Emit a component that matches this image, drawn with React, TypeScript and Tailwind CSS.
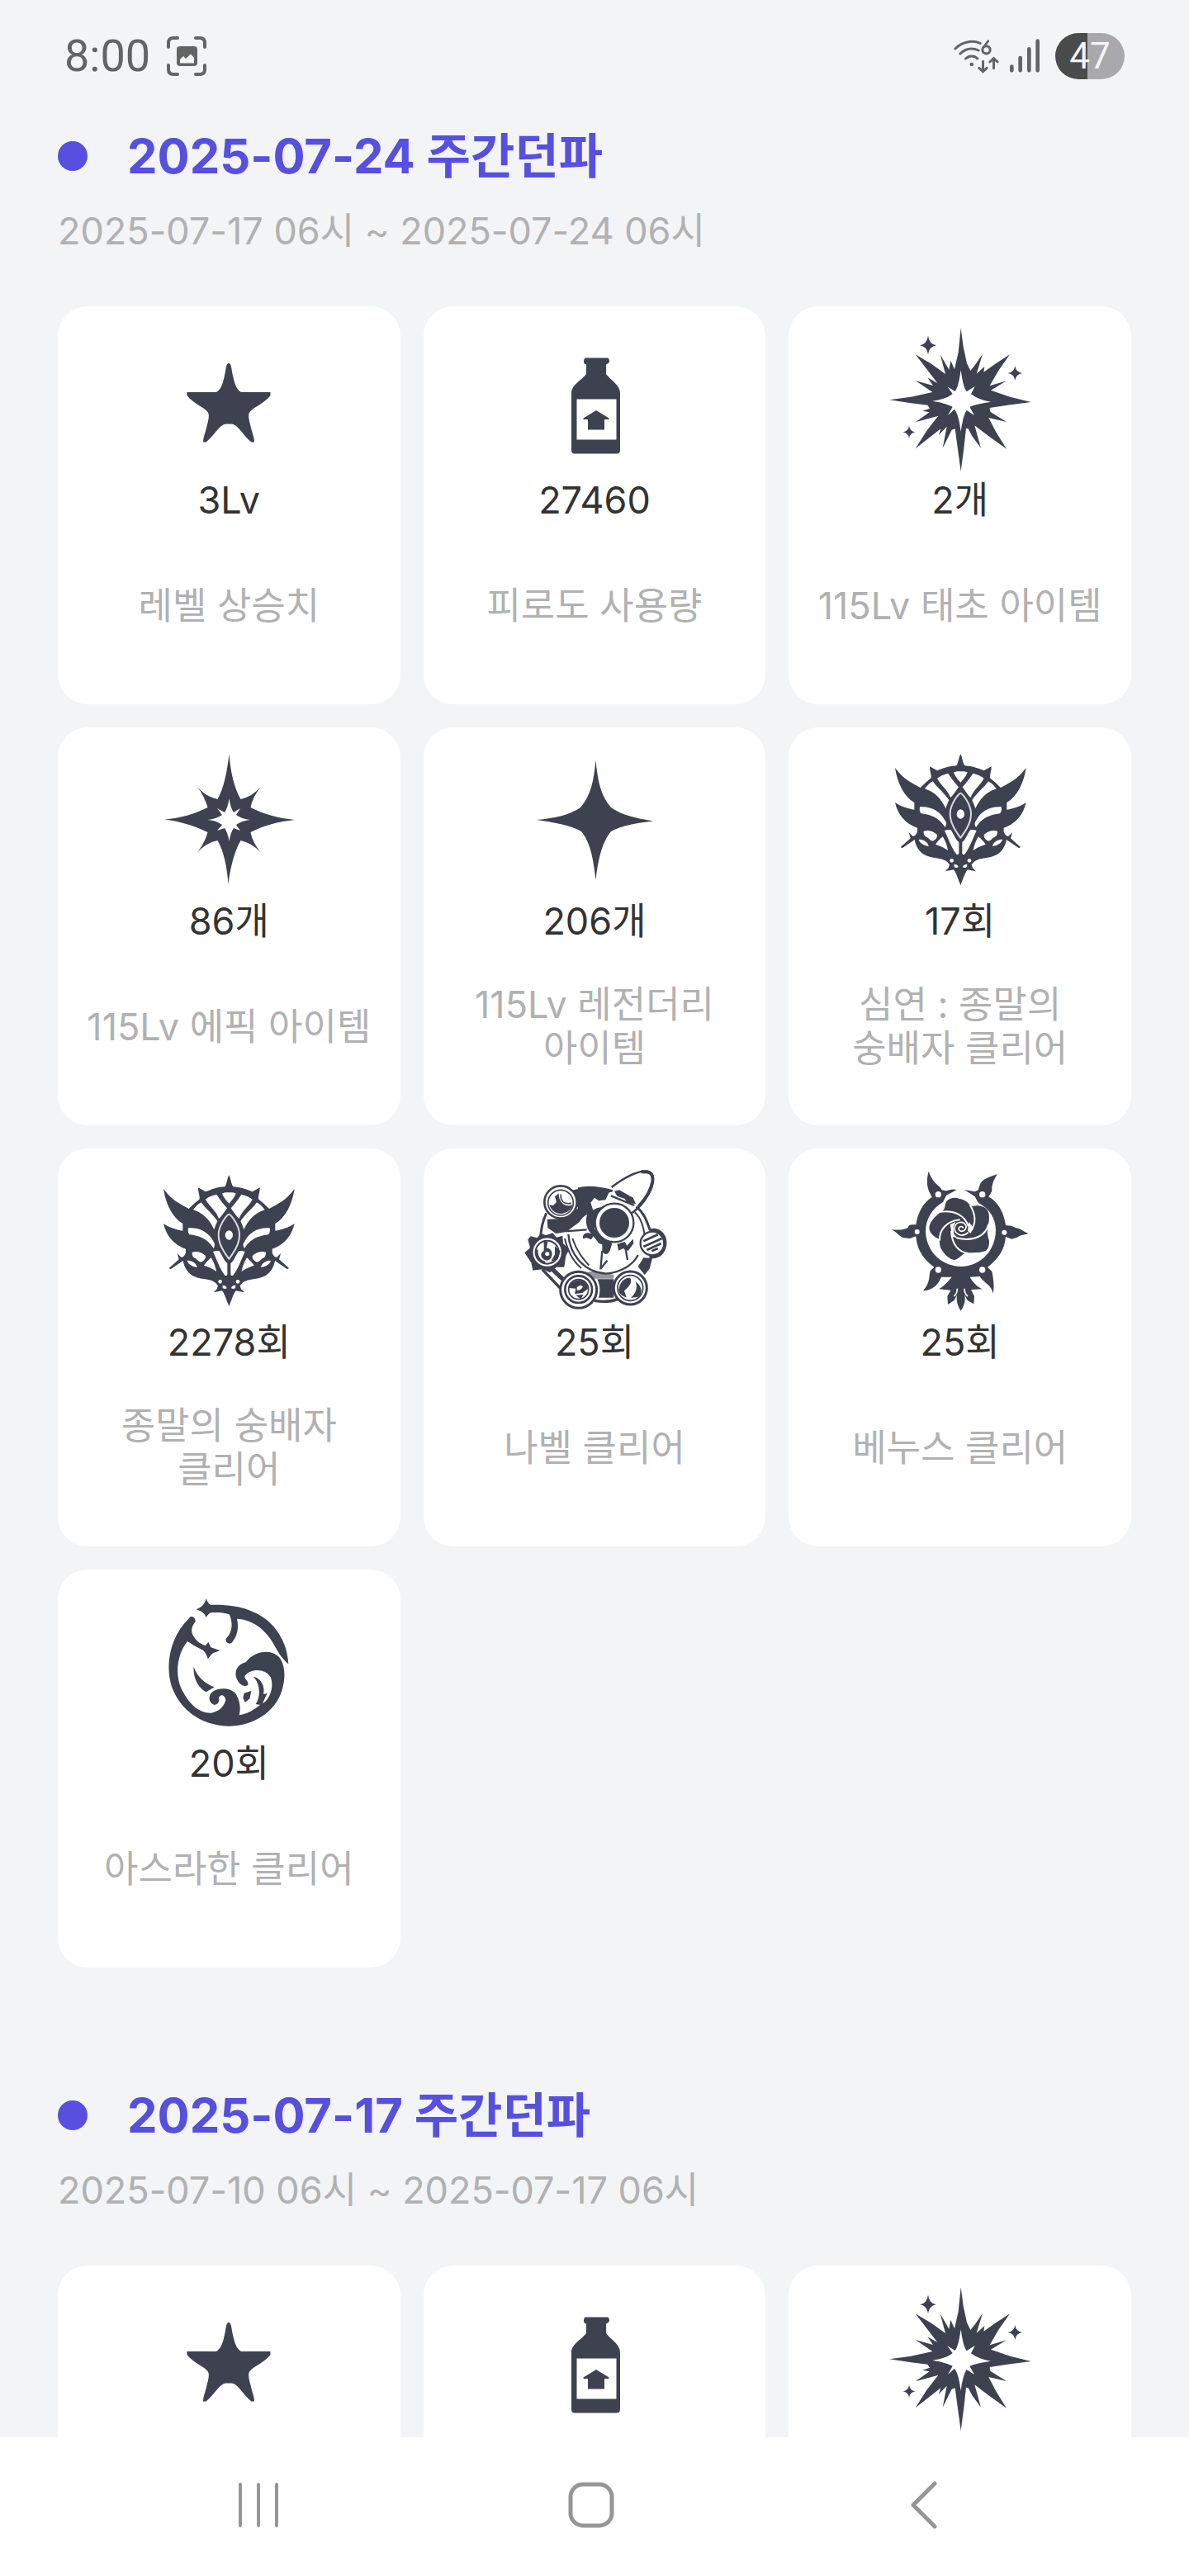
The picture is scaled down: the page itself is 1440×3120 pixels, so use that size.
import type { ReactNode } from "react";

const INK = "#3e4150";

function Art({ box = "0 0 180 180", children }: { box?: string; children: ReactNode }) {
  return (
    <svg viewBox={box} className="size-[180px] shrink-0" fill={INK} aria-hidden="true">
      {children}
    </svg>
  );
}

/* Draws a half once and again flipped around the vertical line x = axis. */
function Mirror({ axis, children }: { axis: number; children: ReactNode }) {
  return (
    <>
      <g>{children}</g>
      <g transform={`translate(${axis * 2} 0) scale(-1 1)`}>{children}</g>
    </>
  );
}

function LevelStar() {
  return (
    <Art>
      <path d="M90 45C93.500 45 93 52 95.500 62C97.500 70 99 76 105 80H140.500V84C134 93 120 98 115.500 104C112.500 108 115 115 117.500 125C119 131 121 135 121 140.500H117.500C108 133 101 119 93.500 118.500H86.500C79 119 72 133 62.500 140.500H59C59 135 61 131 62.500 125C65 115 67.500 108 64.500 104C60 98 46 93 39.500 84V80H75C81 76 82.500 70 84.500 62C87 52 86.500 45 90 45Z" />
    </Art>
  );
}

function Bottle() {
  return (
    <Art>
      <path d="M79 38.500H106Q108 39 108 43Q107 46 104 46.500V58C109 65 121 71 121 81V150Q121 154.500 117 154.500H66Q62 154.500 62 150V81C62 71 75 65 80 58V46.500Q77 46 77 43Q77 39 79 38.500Z" />
      <rect x="68.500" y="88.500" width="48" height="49" fill="#fff" />
      <path d="M92 102L107.500 111.500V113H102V125.500H82V113H76.500V111.500Z" />
    </Art>
  );
}

function PrimevalBurst() {
  return (
    <Art box="339 75 540 540">
      <path d="M611 82L620 150L633 210L646 237L665 213L690 176L668 248L697 222L694 242L736 212L789 178L748 236L716 292L777 274L720 308L790 332L866 351L780 362L716 372L718 386L777 423L712 408L738 458L777 521L712 475L661 436L684 518L652 475L638 448L630 446L622 520L611 603L599 515L590 448L578 452L545 518L560 440L531 470L538 448L446 520L487 455L529 401L446 424L497 388L472 383L498 374L490 362L430 355L352 343L430 332L508 315L446 273L510 291L490 262L526 282L446 178L505 213L555 249L536 178L568 233L574 200L588 232L602 170Z" />
      <path
        fill="#fff"
        d="M611 235C616 270 622 300 632 313L662 294L648 322C670 338 690 345 720 350C690 355 665 358 643 368L660 399L632 381C620 400 615 430 611 458C607 430 602 395 588 377L564 399L581 368C560 358 540 352 508 347C545 342 565 334 581 321L562 295L590 312C600 300 606 270 611 235Z"
      />
      <path d="M492 110Q496 140 522 145Q496 149 492 178Q488 149 462 145Q488 140 492 110ZM808 220Q811 242 834 246Q811 250 808 272Q805 250 782 246Q805 242 808 220ZM423 437Q426 456 445 460Q426 464 423 482Q420 464 401 460Q420 456 423 437Z" />
    </Art>
  );
}

function EpicStar() {
  return (
    <Art>
      <path d="M90.500 8C92 30 97 50 104.500 63Q118 60 129 48Q119 60 116.500 73C132 81 150 86 170 88C150 90 132 95 116.500 103Q119 116 129 127.500Q118 116 104.500 113C97 126 92 145 89.500 166C88 145 84 126 76.500 113Q62 116 52 127.500Q61 116 64.500 103C48 95 32 90 12 87.500C32 86 48 81 64.500 73Q61 60 52 48Q62 60 76.500 63C84 50 88 30 90.500 8Z" />
      <path
        fill="#fff"
        d="M90.500 62Q92 73 96 79L104 74L99 82Q106 87 116 88Q106 89 99 94L104 101L96 98Q92 104 90.500 114Q89 104 85 98L76 101L82 94Q75 89 64 88Q75 87 82 82L76 74L85 79Q89 73 90.500 62Z"
      />
    </Art>
  );
}

function LegendaryStar() {
  return (
    <Art>
      <path d="M91.500 16C94 40 97 58 110 73C122 82 140 86 161 89.500C140 92 122 95 110 102C98 116 94 140 91.500 160.500C89 140 86 116 74 102C62 95 42 91 20 88C42 86 60 82 73 73C86 58 89 40 91.500 16Z" />
    </Art>
  );
}

function WorshipperCrest() {
  return (
    <Art box="99 45 540 540">
      <Mirror axis={370}>
        <path d="M371 70C364 76 364 98 355 112C320 114 300 125 285 130L258 115C257 133 266 146 262 158C245 170 236 180 224 192C195 175 165 165 132 120C140 175 165 225 202 246V272C180 268 155 262 132 246C142 290 168 322 213 338V352C209 364 203 370 196 368L182 354L188 376L152 408L158 412L203 381C207 405 222 435 258 443C285 449 305 448 322 462L330 472L326 484L314 496L345 490C355 502 360 525 371 547Z" />
        <g fill="#fff">
          <path d="M371 133C362 132 354 132 345 136C349 148 360 164 371 174Z" />
          <path d="M325 140C308 144 294 150 285 158C299 184 326 203 333 228C342 222 350 208 363 190C346 170 334 155 325 140Z" />
          <path d="M269 169C257 176 249 184 240 196C276 207 302 235 316 268C320 255 324 246 328 237C308 208 285 192 269 169Z" />
          <path d="M222 262C220 272 221 280 227 286C267 290 295 306 314 336C320 325 319 318 314 312C298 278 262 258 222 262Z" />
          <path d="M236 350C235 362 240 370 248 372C258 378 263 390 273 384C283 378 287 368 284 362C271 350 253 345 236 350Z" />
          <path d="M218 381C232 378 252 390 254 405C236 402 222 394 218 381Z" />
          <path d="M305 370C294 379 285 389 279 398C295 403 311 410 324 420C321 402 315 386 305 370Z" />
          <path d="M312 348C326 377 336 410 355 434C363 438 365 432 364 421V390C350 380 346 360 334 345C325 344 319 345 312 348Z" />
          <circle cx="338" cy="457" r="7" />
          <path d="M346 470Q361 470 362 481Q354 486 347 480Z" />
        </g>
        <path d="M371 183C365 210 324 240 321 288C322 332 354 360 371 392Z" />
        <path
          d="M371 211C360 216 332 254 332 287C332 322 354 352 371 376"
          fill="none"
          stroke="#d9dade"
          strokeWidth="6"
        />
      </Mirror>
      <ellipse cx="370" cy="288" rx="14" ry="17" fill="#fff" />
    </Art>
  );
}

function NabelMachine() {
  return (
    <Art box="60 45 540 540">
      <g fill="none" stroke={INK}>
        <path d="M155 208C142 236 135 265 134 300M270 120C310 108 350 115 395 128M482 184C515 212 522 245 532 270" strokeWidth="9" />
        <path d="M476 205C502 228 508 262 512 288" strokeWidth="6" />
        <path d="M235 285C240 360 295 424 372 428C425 424 472 395 488 360" strokeWidth="7" />
        <path d="M250 300C268 352 290 375 310 398M222 300C232 345 254 385 282 408" strokeWidth="6" />
        <path d="M392 114C440 76 492 52 522 56C554 62 546 112 514 158C495 184 474 204 456 213" strokeWidth="8" />
        <path d="M500 58C530 56 544 62 541 92C536 128 512 160 490 184" strokeWidth="12" />
        <path d="M225 274L302 268M358 345L352 412M440 322L450 378M352 410L376 380M390 145L475 180" strokeWidth="7" />
        <path d="M140 412L205 480M330 526C362 532 390 530 415 520" strokeWidth="10" />
        <path d="M170 405L215 448" strokeWidth="16" />
      </g>
      <path d="M240 128C290 112 345 112 398 126L382 134L370 160L345 163L330 152L316 170L326 200L306 212C284 218 282 240 255 255L228 276L190 282L160 262L158 230L220 228L270 190Z" />
      <path d="M305 208C292 240 305 272 318 282C300 276 285 284 288 300L302 298L318 304L326 292L346 318L358 322V348C370 362 380 358 386 344L394 318L376 304L346 288L330 264L330 230L350 198L372 182L338 190Z" />
      <path d="M412 320L440 312L448 326L470 302L472 318L452 345L434 336L418 344ZM402 128L420 124L470 152L480 174L450 172L440 156L412 146Z" />
      <path d="M340 448H400V515H345C352 490 350 470 340 448ZM488 402L508 370L540 372L530 410L512 432Z" />
      <path d="M230 430L340 418L400 432V446H230Z" opacity=".55" />
      <circle cx="402" cy="243" r="70" fill="#fff" stroke={INK} strokeWidth="7" />
      <circle cx="402" cy="243" r="54" />
      <g fill="#fff" stroke={INK} strokeWidth="8">
        <circle cx="207" cy="168" r="59" />
        <circle cx="207" cy="170" r="46" strokeWidth="5" />
      </g>
      <path d="M166 178C172 198 190 212 212 210C232 206 246 196 250 178C225 188 200 172 200 136L186 148L192 168L180 180Z" />
      <path d="M208 140C205 162 218 178 246 172" fill="none" stroke={INK} strokeWidth="5" />
      <path d="M98 292L122 298L134 282L154 288L178 280L192 296L214 290L216 318L238 340L226 364L220 404L192 404L168 424L142 412L106 416L100 388L76 352L96 334L88 304Z" />
      <circle cx="158" cy="350" r="55" fill="#fff" stroke={INK} strokeWidth="7" />
      <circle cx="158" cy="350" r="42" fill="none" stroke={INK} strokeWidth="6" />
      <path d="M146 308L160 312L156 334C182 338 182 374 158 380C132 376 130 352 146 346ZM186 328L206 346L196 376L172 384L186 358Z" />
      <path d="M152 350Q168 346 166 360Q156 368 150 358Z" fill="#fff" />
      <path d="M120 340Q118 380 150 388" fill="none" stroke={INK} strokeWidth="9" />
      <circle cx="272" cy="487" r="66" fill="#fff" stroke={INK} strokeWidth="9" />
      <circle cx="272" cy="485" r="49" fill="#fff" stroke={INK} strokeWidth="8" />
      <circle cx="272" cy="485" r="36" fill="none" stroke={INK} strokeWidth="5" />
      <path d="M236 480C240 456 270 444 292 454L310 480L286 498L258 502L262 482ZM262 506L290 504L280 520Z" />
      <path d="M266 478Q278 464 288 476Q278 490 266 488Z" fill="#fff" />
      <circle cx="460" cy="480" r="60" fill="#fff" stroke={INK} strokeWidth="9" />
      <circle cx="460" cy="480" r="46" fill="#fff" stroke={INK} strokeWidth="5" />
      <path d="M418 490C420 460 440 440 460 444C470 462 450 480 438 490L446 514C430 510 420 500 418 490ZM478 456C500 470 508 496 490 512L462 516C482 498 488 476 478 456Z" />
      <path d="M530 266C565 254 596 285 592 322C588 358 562 378 530 372L528 358C556 360 576 346 578 318C576 292 556 276 530 282Z" />
      <circle cx="540" cy="318" r="43" fill="#fff" stroke={INK} strokeWidth="7" />
      <path d="M508 310L560 286M508 330L575 300M520 342L572 318M538 346L560 336" fill="none" stroke={INK} strokeWidth="8" />
    </Art>
  );
}

function VenusRose() {
  return (
    <Art box="69 45 540 540">
      <path d="M326 123C310 118 296 126 286 127L272 124C268 108 240 104 224 56C216 84 216 116 230 138L236 150C206 168 184 206 178 250C168 250 160 248 153 252L148 262C130 270 110 270 88 267C108 276 116 292 134 298L156 300L178 292C182 342 205 376 244 404L230 418C224 438 232 458 204 490C240 488 258 468 270 440L308 440C296 456 280 472 262 484L304 488L292 510L294 540L316 526L328 505C322 524 330 548 341 563C352 548 360 524 354 505L366 526L388 538L390 510L378 486L420 484C400 476 384 458 374 440L410 438C424 462 452 468 458 500C464 470 458 440 454 420L438 404C476 376 500 342 504 294L526 302L546 296C560 286 570 288 586 282C568 276 556 262 542 262L524 254L504 252C498 206 476 168 442 148L454 128C452 104 462 84 474 66C446 76 416 84 410 106L404 124L392 130L354 123L392 148L404 170C446 192 468 226 468 272C466 344 414 400 342 402C268 400 216 346 213 276C213 228 238 190 276 168L288 144Z" />
      <g fill="#fff">
        <circle cx="259" cy="140" r="11" />
        <circle cx="419" cy="140" r="11" />
        <circle cx="182" cy="276" r="9" />
        <circle cx="499" cy="278" r="9" />
        <circle cx="259" cy="414" r="11" />
        <circle cx="419" cy="414" r="11" />
      </g>
      <path d="M328 482Q328 500 316 510M354 482Q354 500 366 510" fill="none" stroke="#fff" strokeWidth="5" />
      <path d="M276 198C286 190 282 172 290 164C300 154 320 148 336 156C352 158 368 168 376 182C392 184 400 176 412 182C428 184 440 194 443 212C446 232 440 250 438 266C436 284 440 296 444 308C444 324 442 336 432 344C410 354 380 350 360 352C344 356 336 376 316 378C298 374 280 356 270 338C262 324 266 312 262 302C244 294 226 280 226 260C230 234 252 216 276 198Z" />
      <g fill="none" stroke="#fff" strokeWidth="6">
        <path d="M262 204C314 196 356 214 368 256" />
        <path d="M374 178C396 214 396 246 378 272" />
        <path d="M442 248C432 288 390 314 326 298" />
        <path d="M368 354C334 350 308 322 306 272" />
        <path d="M264 308C262 268 290 236 338 232" />
      </g>
      <path d="M370 240L388 262L376 282L366 272ZM302 250L322 240L314 258L316 284L332 302L310 292Z" fill="#fff" />
      <path
        d="M350 262C345 252 330 258 334 268C342 280 362 272 360 254C352 236 322 236 318 262C318 286 348 298 368 278"
        fill="none"
        stroke="#fff"
        strokeWidth="5"
      />
    </Art>
  );
}

function AsrahanMoon() {
  return (
    <Art box="22 15 540 540">
      <path d="M210 48C214 60 219 67 226 72C330 68 405 95 455 150C488 190 505 230 509 286C494 275 474 250 462 226C436 172 385 124 322 122C330 155 322 186 304 208C296 218 278 208 282 194C306 170 308 136 294 106C270 98 245 99 226 100C219 104 214 110 210 118C205 104 198 96 174 88C198 78 205 66 210 48Z" />
      <path d="M148 120C154 108 172 116 171 132C164 142 156 152 158 172C166 196 186 214 208 220L218 206L227 226L260 237L232 248L216 268C212 250 202 236 190 232C172 224 156 212 142 204C104 250 94 330 124 384C150 434 186 466 228 464C254 460 274 444 281 418C280 400 262 392 256 410C260 424 250 436 238 434C218 426 216 400 234 386C262 368 306 374 320 398C334 424 336 450 330 472C372 468 400 436 424 424C446 402 456 362 444 334C426 302 372 300 350 330C350 344 364 346 362 362C346 374 324 356 318 330C314 304 330 286 354 280C384 240 442 230 474 260C496 284 498 330 490 364C474 448 396 510 296 512C196 512 116 456 84 366C60 286 80 186 148 120Z" />
      <path d="M165 296C176 328 200 356 240 370L210 388C180 372 162 336 165 296Z" />
      <path d="M382 332C412 340 424 368 418 396L432 392L412 436L390 432C408 404 408 362 382 332Z" />
      <path d="M348 392L374 384L368 412L352 426L344 410Z" />
    </Art>
  );
}

type Stat = { icon: () => ReactNode; value?: string; label?: string };
type Week = { title: string; period: string; stats: Stat[] };

const WEEKS: Week[] = [
  {
    title: "2025-07-24 주간던파",
    period: "2025-07-17 06시 ~ 2025-07-24 06시",
    stats: [
      { icon: LevelStar, value: "3Lv", label: "레벨 상승치" },
      { icon: Bottle, value: "27460", label: "피로도 사용량" },
      { icon: PrimevalBurst, value: "2개", label: "115Lv 태초 아이템" },
      { icon: EpicStar, value: "86개", label: "115Lv 에픽 아이템" },
      { icon: LegendaryStar, value: "206개", label: "115Lv 레전더리\n아이템" },
      { icon: WorshipperCrest, value: "17회", label: "심연 : 종말의\n숭배자 클리어" },
      { icon: WorshipperCrest, value: "2278회", label: "종말의 숭배자\n클리어" },
      { icon: NabelMachine, value: "25회", label: "나벨 클리어" },
      { icon: VenusRose, value: "25회", label: "베누스 클리어" },
      { icon: AsrahanMoon, value: "20회", label: "아스라한 클리어" },
    ],
  },
  {
    title: "2025-07-17 주간던파",
    period: "2025-07-10 06시 ~ 2025-07-17 06시",
    stats: [{ icon: LevelStar }, { icon: Bottle }, { icon: PrimevalBurst }],
  },
];

function StatCard({ icon: Icon, value, label }: Stat) {
  return (
    <li className="flex min-h-[482px] flex-col items-center rounded-[36px] bg-white py-6 text-center">
      <Icon />
      {value && <p className="text-[45px] leading-[62px] text-[#333333]">{value}</p>}
      {label && (
        <div className="flex flex-1 items-center">
          <p className="text-[45px] leading-[53px] whitespace-pre-line text-[#b1b1b1]">{label}</p>
        </div>
      )}
    </li>
  );
}

function WeekSection({ title, period, stats }: Week) {
  return (
    <section>
      <h2 className="flex items-center gap-12 text-[58px] leading-[74px] font-bold text-[#564fe0]">
        <span className="size-9 shrink-0 rounded-full bg-[#564fe0]" />
        {title}
      </h2>
      <p className="mt-6 text-[45px] leading-[60px] text-[#b1b1b1]">{period}</p>
      <ul className="mt-[61px] grid grid-cols-3 gap-7">
        {stats.map((stat, i) => (
          <StatCard key={i} {...stat} />
        ))}
      </ul>
    </section>
  );
}

function StatusBar() {
  return (
    <header className="flex h-[136px] shrink-0 items-center justify-between px-[78px] text-[#636564]">
      <div className="flex items-center gap-5">
        <time className="font-['Roboto'] text-[54px] leading-none">8:00</time>
        <svg viewBox="0 0 48 48" className="size-12" fill="none" stroke="currentColor" strokeWidth="4" strokeLinecap="round" aria-hidden="true">
          <path d="M2 13V8Q2 2 8 2H13M35 2H40Q46 2 46 8V13M46 35V40Q46 46 40 46H35M13 46H8Q2 46 2 40V35" />
          <path
            fill="currentColor"
            stroke="none"
            fillRule="evenodd"
            d="M16 12H33Q37 12 37 16V32Q37 36 33 36H16Q12 36 12 32V16Q12 12 16 12ZM16 32.500H33V26L29 21.500L23 27L20 24L16 28Z"
          />
        </svg>
      </div>
      <div className="flex items-center">
        <svg viewBox="160 84 164 126" className="h-[42px] w-[55px]" fill="none" stroke="#636564" strokeWidth="9" strokeLinecap="round" aria-hidden="true">
          <path d="M165 120C190 94 228 88 256 100M183 138C204 118 228 116 250 126M203 156C216 144 234 144 246 156" />
          <circle cx="225" cy="177" r="7" fill="#636564" stroke="none" />
          <path d="M285 92L267 116" strokeWidth="8" />
          <circle cx="278" cy="124" r="14" strokeWidth="9" />
          <path d="M266 166V202M252 190L266 203L280 190M305 191V156M291 168L305 155L319 168" />
        </svg>
        <svg viewBox="360 84 114 126" className="ml-3 h-[42px] w-[38px]" stroke="#636564" strokeWidth="14" strokeLinecap="round" aria-hidden="true">
          <path d="M370 185V199M401 153V199M433 121V199M464 92V199" />
        </svg>
        <div className="ml-[18px] flex h-14 w-[84px] items-center justify-center rounded-full bg-linear-to-r from-[#4a4c4b] from-[46%] to-[#a9a9ac] to-[46%] font-['Roboto'] text-[44px] leading-none text-[#f5f5f7]">
          47
        </div>
      </div>
    </header>
  );
}

function NavBar() {
  return (
    <nav className="flex h-[168px] shrink-0 items-center justify-center gap-[345px] bg-white pr-2 pb-1">
      <button type="button" aria-label="Recent apps">
        <svg viewBox="0 0 58 58" className="size-[58px]" stroke="#969696" strokeWidth="4" strokeLinecap="round">
          <path d="M7 4V54M29 4V54M51 4V54" />
        </svg>
      </button>
      <button type="button" aria-label="Home">
        <svg viewBox="0 0 58 58" className="size-[58px]" stroke="#969696" strokeWidth="5" fill="none">
          <rect x="4" y="4" width="50" height="50" rx="15" />
        </svg>
      </button>
      <button type="button" aria-label="Back">
        <svg viewBox="0 0 58 58" className="size-[58px]" stroke="#969696" strokeWidth="5" strokeLinecap="round" strokeLinejoin="round" fill="none">
          <path d="M42 3L16 29L42 55" />
        </svg>
      </button>
    </nav>
  );
}

export default function App() {
  return (
    <div className="flex h-screen flex-col bg-[#f2f4f6] font-['Inter','Noto_Sans_CJK_KR',sans-serif]">
      <StatusBar />
      <main className="flex min-h-0 flex-1 flex-col gap-[142px] overflow-y-auto px-[70px] pt-4 [scrollbar-width:none]">
        {WEEKS.map((week) => (
          <WeekSection key={week.title} {...week} />
        ))}
      </main>
      <NavBar />
    </div>
  );
}
